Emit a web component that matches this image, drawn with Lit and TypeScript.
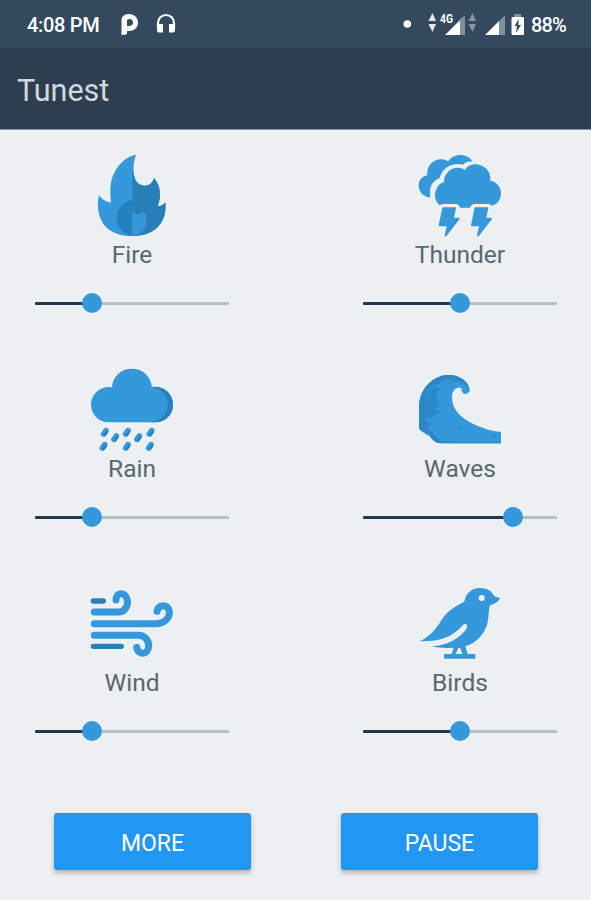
import { LitElement, html, css, svg } from "lit";
import { customElement, property } from "lit/decorators.js";

const BLUE = "#3498db";
const DEEP = "#2980b9";

const fire = svg`
  <path fill=${BLUE} d="M168 29C136 34 104 66 94 107C89 130 91 152 93 172C80 172 65 164 57 151C50 184 54 214 72 239C92 264 122 273 156 273C196 273 226 260 243 234C256 214 258 192 256 172C250 180 242 184 233 184C244 157 243 123 222 99C218 114 206 123 193 122C174 121 163 106 161 84C159 62 163 43 168 29Z"/>
  <path fill=${DEEP} d="M157 72L161 84C163 106 174 121 193 122C206 123 218 114 222 99C243 123 244 157 233 184C242 184 250 180 256 172C258 192 256 214 243 234C226 260 196 273 156 273Z"/>
  <path fill="#2581bd" d="M157 165C133 166 112 190 110 217C108 242 124 264 156 273Z"/>
  <path fill=${BLUE} d="M157 189C158 200 164 208 174 208C184 208 190 202 191 197C201 211 203 232 195 247C188 261 174 270 156 272Z"/>`;

const thunder = svg`
  <path fill=${BLUE} d="M74 158C54 155 41 140 41 121C41 106 52 93 67 91C64 70 77 49 98 44C110 41 121 43 130 49C139 34 157 28 174 31C188 34 198 40 202 50C190 48 181 52 174 59C143 52 113 67 104 99C86 106 75 122 75 140C75 147 77 153 74 158Z"/>
  <path fill=${BLUE} d="M105 181C88 169 86 144 96 128C101 119 108 114 117 111C117 86 136 68 158 68C166 68 174 70 180 75C187 62 203 55 220 59C246 64 258 84 256 107C275 109 289 127 288 147C287 164 277 178 261 182C256 177 251 176 246 177L207 177C201 178 197 182 195 188L165 188C163 181 159 177 152 177L117 177C111 177 107 178 105 181Z"/>
  <path fill=${BLUE} stroke=${BLUE} stroke-width="6" stroke-linejoin="round" d="M115 190H150L143 221H161L122 271L129 241H104ZM211 190H247L240 221H258L219 271L226 241H201Z"/>`;

const rain = svg`
  <path fill=${BLUE} d="M85 187A53 53 0 1 1 96 82C98 49 123 26 156 26C188 26 213 49 216 82C252 77 279 102 279 134C279 164 256 187 225 187Z"/>
  <path fill=${DEEP} d="M216 81C252 77 279 102 279 134C279 164 256 187 225 187H210C244 182 263 161 263 132C263 105 247 87 216 81Z"/>
  <g stroke=${BLUE} stroke-width="17" stroke-linecap="round">
    <path d="M78 212L71 222M144 212L137 222M215 212L208 222M109 228L102 238M178 228L171 238M74 254L67 264M144 254L137 264M213 254L206 264"/></g>
  <g stroke=${DEEP} stroke-width="7" stroke-linecap="round">
    <path d="M81 216L75 225M147 216L141 225M218 216L212 225M112 232L106 241M181 232L175 241M77 258L71 267M147 258L141 267M216 258L210 267"/></g>`;

const waves = svg`
  <path fill=${BLUE} d="M42 141C43 92 75 54 119 46C154 40 188 59 195 91C192 99 184 104 177 101C171 99 168 92 170 85C156 76 142 91 141 108C139 146 166 174 205 192C231 204 257 213 288 216V250H107C90 249 82 240 73 228C60 221 44 212 42 204Z"/>
  <path fill="#2b87c5" d="M42 141C43 92 75 54 119 46C154 40 188 59 193 84C185 79 180 72 173 69C158 61 141 68 126 73C134 65 142 61 151 60C130 53 106 63 91 80L106 86L91 109C99 120 97 130 107 140L90 142C94 151 102 157 110 164C94 158 83 163 77 177C69 168 60 166 61 179C65 188 74 191 82 191C69 195 64 207 73 219C58 219 44 212 42 204Z"/>
  <path fill=${BLUE} opacity=".5" d="M55 132C58 99 75 77 99 63C87 80 73 99 68 126Z"/>
  <path fill="#2b87c5" d="M68 208C82 214 91 226 100 237C107 243 119 245 135 245H288V250H107C90 249 80 239 68 208ZM106 192L118 197L113 203ZM161 196Q169 193 173 203L163 202ZM259 221L272 225L270 231L260 228Z"/>`;

const wind = svg`
  <g fill="none" stroke=${BLUE} stroke-width="21" stroke-linecap="round">
    <path d="M43 111H115C134 110 145 94 142 76C138 51 108 49 108 75"/>
    <path d="M43 146H230C254 145 270 129 268 109C265 86 233 87 231 109"/>
    <path d="M43 181H174C195 181 207 196 206 214C204 240 174 242 170 217"/></g>
  <path fill="none" stroke=${DEEP} stroke-width="16" stroke-linecap="round" d="M40 78H70M40 214H124"/>`;

const birds = svg`
  <path fill=${BLUE} fill-rule="evenodd" d="M44 199C69 188 93 163 108 137C126 107 151 94 178 80C181 57 199 39 225 39C246 39 261 48 267 63L286 70C280 79 271 87 255 91C250 108 252 131 246 149C236 181 211 205 181 214L188 237H211V251H117V237H140L146 218C123 220 103 219 80 214C128 211 168 188 186 158C190 149 180 143 174 150C144 185 105 200 44 199ZM160 219L152 237H173L165 218ZM230 60A9 9 0 1 0 230 78A9 9 0 1 0 230 60Z"/>`;

@customElement("sound-tile")
class SoundTile extends LitElement {
  @property() label = "";
  @property() box = "";
  @property({ type: Number }) level = 0;
  @property({ attribute: false }) art: unknown;

  static styles = css`
    :host { display: flex; flex-direction: column; align-items: center; height: 214px; }
    .icon { display: block; width: 82px; height: 82px; flex: none; overflow: visible; }
    .label { margin-top: 4px; height: 30px; line-height: 30px; font-size: 24.5px; color: #5b6673; white-space: nowrap; }
    .slider { margin-top: 23px; width: 100%; height: 20px; display: flex; align-items: center; }
    .on { height: 3px; background: #23374d; border-radius: 1px 0 0 1px; }
    .thumb { width: 20px; height: 20px; border-radius: 50%; background: #3498db; margin: 0 -10px; flex: none; z-index: 1; }
    .off { height: 3px; flex: 1; background: #b7bfc2; border-radius: 0 1px 1px 0; }
  `;

  render() {
    return html`
      <svg class="icon" viewBox=${this.box}>${this.art}</svg>
      <div class="label">${this.label}</div>
      <div class="slider">
        <div class="on" style="width:${this.level}%"></div>
        <div class="thumb"></div>
        <div class="off"></div>
      </div>`;
  }
}

const sounds = [
  { label: "Fire", art: fire, box: "33 27 246 246", level: 29.6 },
  { label: "Thunder", art: thunder, box: "42 27 246 246", level: 50 },
  { label: "Rain", art: rain, box: "33 24 246 246", level: 29.6 },
  { label: "Waves", art: waves, box: "42 24 246 246", level: 77.3 },
  { label: "Wind", art: wind, box: "33 21 246 246", level: 29.6 },
  { label: "Birds", art: birds, box: "42 21 246 246", level: 50 },
];

@customElement("app-root")
class AppRoot extends LitElement {
  static styles = css`
    :host { display: flex; flex-direction: column; height: 900px; width: 591px; overflow: hidden; background: #ecf0f1; font-family: Roboto, "Liberation Sans", sans-serif; }
    .status { display: flex; justify-content: space-between; height: 48px; flex: none; background: #34495e; color: #fff; font-size: 20px; font-weight: 500; line-height: 50px; padding: 0 26px 0 27px; }
    .side { display: flex; }
    .time, .charge { letter-spacing: -.3px; white-space: nowrap; }
    .time { width: 72px; }
    .charge { width: 34px; letter-spacing: -.9px; }
    .glyphs { display: block; width: 80px; height: 48px; }
    .signals { display: block; width: 131px; height: 48px; }
    .net { font-size: 12px; font-weight: 700; }
    .bar { height: 82px; flex: none; box-sizing: border-box; background: #2c3e50; border-bottom: 1px solid #84909a; color: #d5d9dd; font-size: 30.5px; line-height: 86px; padding-left: 17px; }
    .grid { display: grid; grid-template-columns: 194px 194px; column-gap: 134px; padding: 24px 0 0 35px; }
    .actions { display: flex; gap: 90px; padding: 17px 0 0 54px; }
    .btn { width: 197px; height: 57px; border: 0; padding: 3px 0 0; border-radius: 3px; background: #2196f3; color: #fff; font: 400 23px Roboto, "Liberation Sans", sans-serif; box-shadow: 0 3px 5px rgba(0,0,0,.25); }
  `;

  render() {
    return html`
      <header class="status">
        <div class="side">
          <span class="time">4:08 PM</span>
          <svg class="glyphs" viewBox="99 0 80 48">
            <path fill="#fff" fill-rule="evenodd" d="M121.500 35V20C121.500 16 125 14 129 14C134.500 14 138 18 138 22.500C138 27.500 134 31 129 31H127V34L124 35ZM127 26H129.500C131.500 26 133 24.500 133 22.500C133 20.500 131.500 19 129.500 19C127.500 19 126.500 20.500 127 22.500Z"/>
            <path fill="none" stroke="#fff" stroke-width="2.200" d="M158 28V23A8 8 0 0 1 174 23V28"/>
            <path fill="#fff" d="M157 24H163V32.500H159Q157 32.500 157 30ZM169 24H175V30Q175 32.500 173 32.500H169Z"/>
          </svg>
        </div>
        <div class="side">
          <svg class="signals" viewBox="400 0 131 48">
            <circle cx="407.300" cy="24" r="3.800" fill="#fff"/>
            <path fill="#e4e8eb" d="M432.500 13L436 21H428.500ZM428.500 24H436L432.500 32Z"/>
            <path fill="#8794a2" d="M472.500 13L476 21H468.500ZM468.500 24H476L472.500 32Z"/>
            <path fill="#8090a0" d="M460 19L465 15.500V35H460ZM499 21L505 15.500V35H499Z"/>
            <path fill="#fff" d="M445 35L460 20V35ZM485 35L499 21V35Z"/>
            <text class="net" x="440" y="23" fill="#fff" textLength="13" lengthAdjust="spacingAndGlyphs">4G</text>
            <path fill="#8090a0" d="M514 14H521V18H514Z"/>
            <rect x="511.500" y="17" width="12.500" height="18" rx="1" fill="#fff"/>
            <path fill="#34495e" d="M518.800 19L514.500 26H517L516 33L521 25H518.300Z"/>
          </svg>
          <span class="charge">88%</span>
        </div>
      </header>
      <div class="bar">Tunest</div>
      <main class="grid">
        ${sounds.map(s => html`<sound-tile .label=${s.label} .art=${s.art} .box=${s.box} .level=${s.level}></sound-tile>`)}
      </main>
      <div class="actions">
        <button class="btn">MORE</button>
        <button class="btn">PAUSE</button>
      </div>`;
  }
}
